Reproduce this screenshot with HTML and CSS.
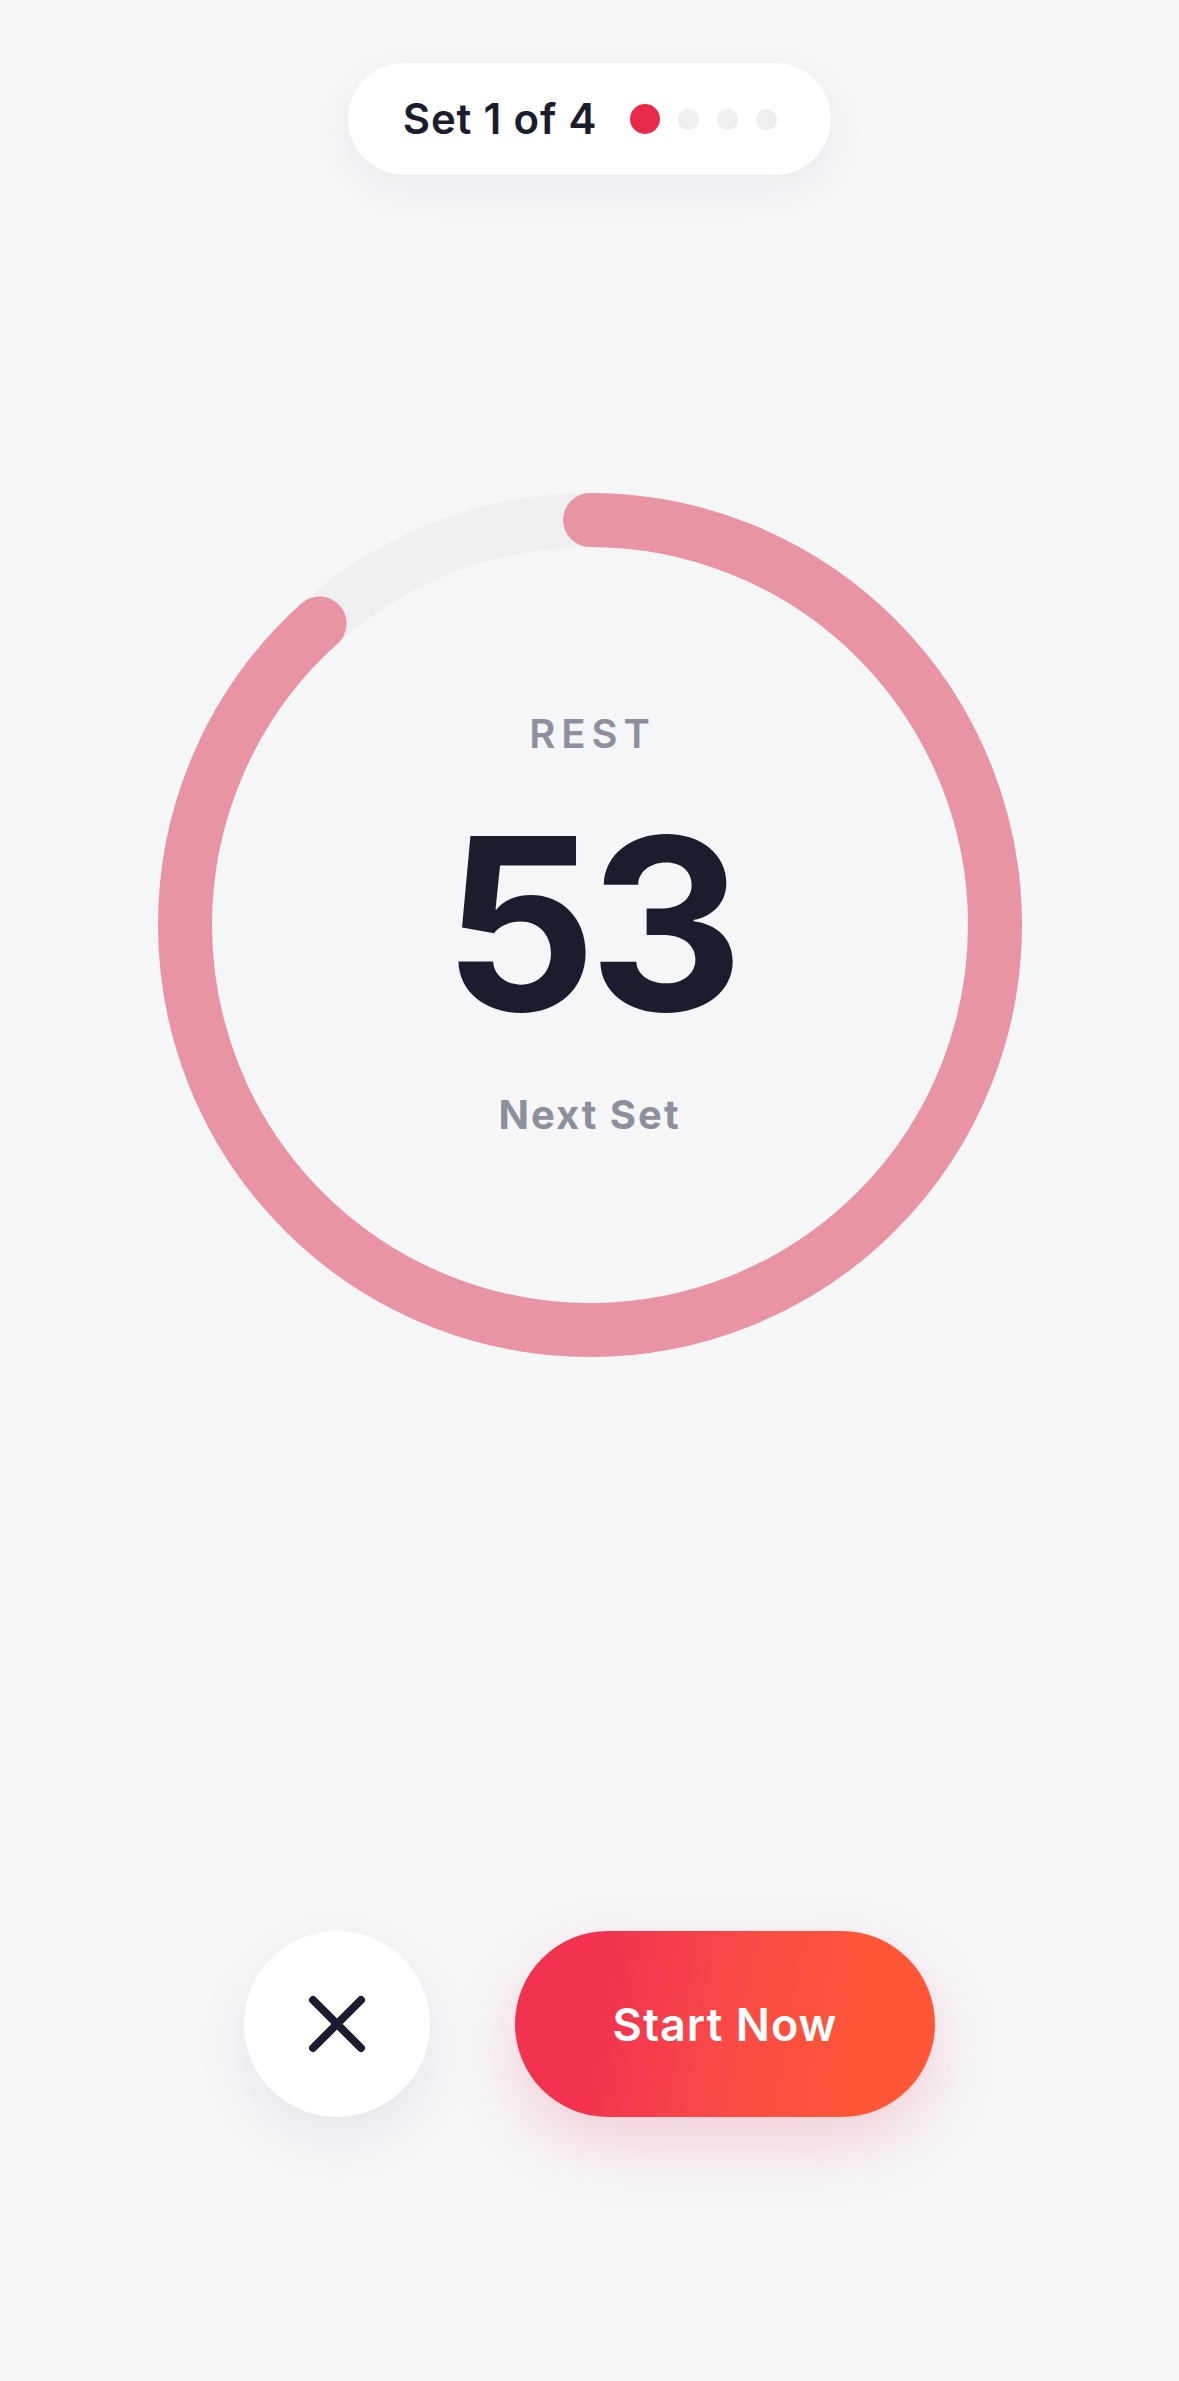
FILE: index.html
```html
<!DOCTYPE html>
<html lang="en">

<head>
    <meta charset="UTF-8">
    <meta name="viewport" content="width=device-width, initial-scale=1.0">
    <title>Rest Timer</title>
    <link rel="stylesheet" href="styles.css">
</head>

<body>
    <div class="screen">
        <div class="set_pill">
            <span class="set_text">Set 1 of 4</span>
            <ul class="set_dots">
                <li class="on"></li>
                <li></li>
                <li></li>
                <li></li>
            </ul>
        </div>

        <div class="ring">
            <svg class="ring_svg" width="864" height="864" viewBox="0 0 864 864">
                <circle class="ring_track" cx="432" cy="432" r="405"></circle>
                <!-- 53 of 60 seconds left: 2544.69 * 53 / 60 -->
                <circle class="ring_bar" cx="432" cy="432" r="405" stroke-dasharray="2247.8 2544.69" transform="rotate(-90 432 432)"></circle>
            </svg>
            <div class="ring_label">REST</div>
            <div class="ring_count">53</div>
            <div class="ring_sub">Next Set</div>
        </div>

        <div class="actions">
            <a href="javascript:;" class="btn_close">
                <svg width="58" height="58" viewBox="0 0 58 58">
                    <path d="M5 5 L53 53 M53 5 L5 53" stroke="#1b1c2e" stroke-width="8" stroke-linecap="round" fill="none"></path>
                </svg>
            </a>
            <a href="javascript:;" class="btn_start">Start Now</a>
        </div>
    </div>
</body>

</html>
```

FILE: styles.css
```css
* {
    margin: 0;
    padding: 0;
}

body {
    background-color: #f5f6f8;
    font-family: Inter, "Noto Sans", sans-serif;
    color: #1b1c2e;
}

.screen {
    display: flex;
    flex-direction: column;
    align-items: center;
    width: 1179px;
    height: 2381px;
    padding-top: 63px;
    box-sizing: border-box;
}

/* top pill */
.set_pill {
    display: flex;
    align-items: center;
    height: 112px;
    padding: 0 54px 0 55px;
    box-sizing: border-box;
    background-color: #fff;
    border-radius: 56px;
    box-shadow: 0 14px 40px rgba(30, 32, 50, 0.06);
}

.set_text {
    font-size: 42px;
    line-height: 1;
    font-weight: 600;
    letter-spacing: 0.8px;
}

.set_dots {
    display: flex;
    align-items: center;
    gap: 18px;
    margin-left: 33px;
    list-style: none;
}

.set_dots li {
    width: 21px;
    height: 21px;
    border-radius: 50%;
    background-color: #edeef0;
}

.set_dots li.on {
    width: 30px;
    height: 30px;
    background-color: #e8294a;
}

/* ring */
.ring {
    position: relative;
    display: flex;
    flex-direction: column;
    align-items: center;
    justify-content: center;
    width: 864px;
    height: 864px;
    margin-top: 318px;
    padding-bottom: 2px;
    box-sizing: border-box;
}

.ring_svg {
    position: absolute;
    top: 0;
    left: 0;
}

.ring_track,
.ring_bar {
    fill: none;
    stroke-width: 54;
}

.ring_track {
    stroke: #eeeff1;
}

.ring_bar {
    stroke: #e994a5;
    stroke-linecap: round;
}

.ring_label,
.ring_count,
.ring_sub {
    position: relative;
    line-height: 1;
}

.ring_label {
    font-size: 40px;
    font-weight: 600;
    letter-spacing: 6px;
    text-indent: 6px;
    color: #8d909b;
}

.ring_count {
    margin-top: 50px;
    font-size: 240px;
    font-weight: 700;
    letter-spacing: -8px;
}

.ring_sub {
    margin-top: 51px;
    font-size: 40px;
    font-weight: 700;
    letter-spacing: 2px;
    color: #8d909b;
}

/* bottom buttons */
.actions {
    display: flex;
    align-items: center;
    gap: 85px;
    margin-top: 574px;
}

.btn_close {
    display: flex;
    align-items: center;
    justify-content: center;
    width: 186px;
    height: 186px;
    border-radius: 50%;
    background-color: #fff;
    box-shadow: 0 22px 56px rgba(30, 32, 50, 0.07);
}

.btn_start {
    display: flex;
    align-items: center;
    justify-content: center;
    width: 420px;
    height: 186px;
    border-radius: 93px;
    background: linear-gradient(100deg, #f2334f 22%, #fa4a46 52%, #ff5638 80%);
    box-shadow: 0 26px 64px rgba(242, 51, 80, 0.2);
    text-decoration: none;
    color: #fff;
    font-size: 45px;
    font-weight: 600;
    letter-spacing: 1px;
    line-height: 1;
}
```
